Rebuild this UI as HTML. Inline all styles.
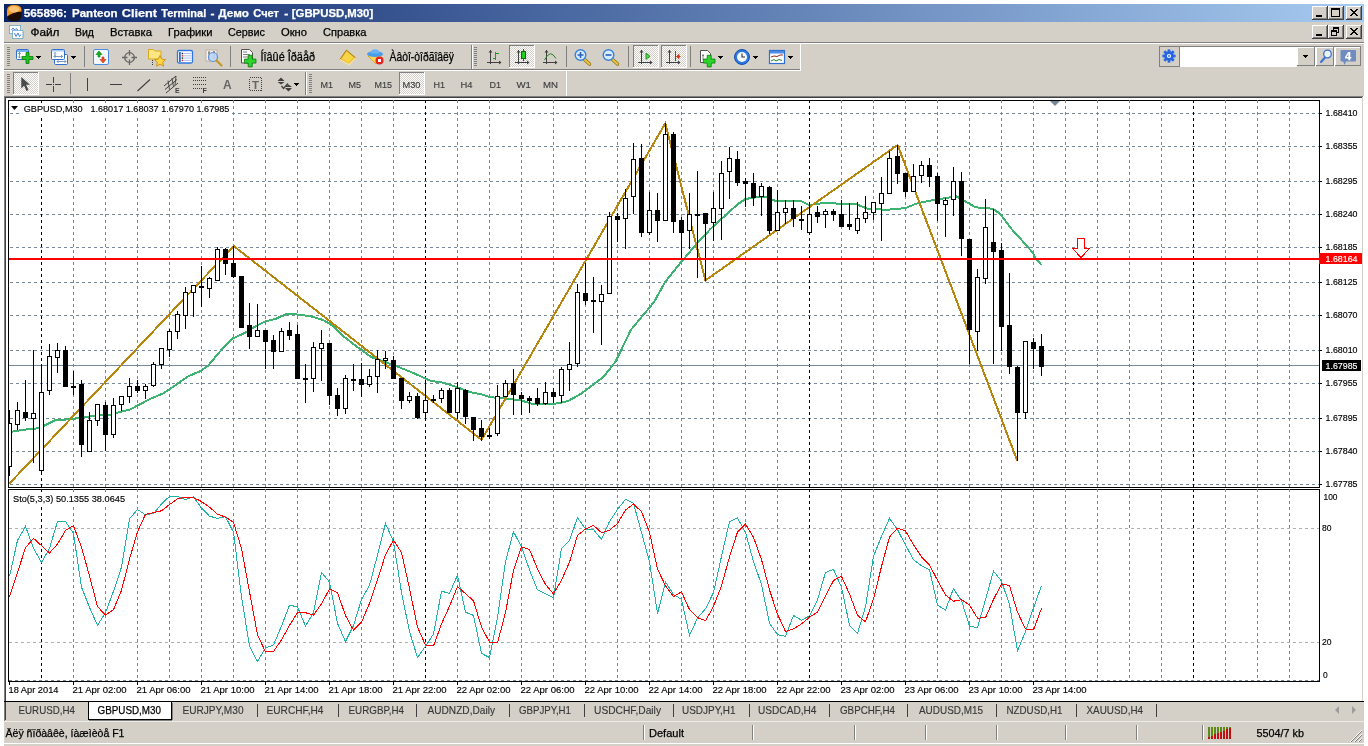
<!DOCTYPE html>
<html lang="ru"><head><meta charset="utf-8"><title>565896: Panteon Client Terminal - Демо Счет - [GBPUSD,M30]</title>
<style>
html,body{margin:0;padding:0;background:#fff;}
body{width:1368px;height:746px;overflow:hidden;position:relative;}
svg{position:absolute;left:0;top:0;display:block;will-change:transform;}
text{font-family:"Liberation Sans","DejaVu Sans",sans-serif;font-size:11px;fill:#000;stroke:#000;stroke-width:0.25px;}
.b{font-weight:bold;}
.c{shape-rendering:crispEdges;}
.ax{font-size:9.4px;stroke-width:0.15px;}
.tf{font-size:9.5px;fill:#404040;stroke:#404040;stroke-width:0.15px;}
.tab{font-size:11px;fill:#383838;stroke:#383838;stroke-width:0.15px;}
.tabs{font-size:11px;fill:#000;}
.w{fill:#fff;stroke:#fff;}
</style></head><body>
<svg width="1368" height="746" viewBox="0 0 1368 746">
<defs>
<linearGradient id="tg" x1="0" y1="0" x2="1" y2="0"><stop offset="0" stop-color="#0A246A"/><stop offset="1" stop-color="#A6CAF0"/></linearGradient>
<pattern id="chk" width="2" height="2" patternUnits="userSpaceOnUse"><rect width="2" height="2" fill="#fff"/><rect width="1" height="1" fill="#D4D0C8"/><rect x="1" y="1" width="1" height="1" fill="#D4D0C8"/></pattern>
<clipPath id="cpm"><rect x="9" y="101" width="1310" height="386"/></clipPath>
<clipPath id="cps"><rect x="9" y="490" width="1310" height="191"/></clipPath>
</defs>
<rect class="c" x="4" y="4" width="1360" height="742" fill="#D4D0C8" />
<rect class="c" x="4" y="4" width="1360" height="18" fill="url(#tg)" />
<g><rect x="7" y="5" width="14.500" height="16" rx="5.500" fill="#1C0E02"/><path d="M7 16.500V10.500Q7 5 14 5Q21.500 5 21.500 10V11.500Q13 12 7 16.500Z" fill="#F59A23"/><ellipse cx="14" cy="9.300" rx="5.200" ry="3.200" fill="#FFD7A6" fill-opacity="0.650"/></g>
<text x="23.75" y="16.5" class="b w" textLength="43.25" lengthAdjust="spacingAndGlyphs">565896:</text>
<text x="72" y="16.5" class="b w" textLength="45.5" lengthAdjust="spacingAndGlyphs">Panteon</text>
<text x="121.75" y="16.5" class="b w" textLength="35.25" lengthAdjust="spacingAndGlyphs">Client</text>
<text x="161.25" y="16.5" class="b w" textLength="45" lengthAdjust="spacingAndGlyphs">Terminal</text>
<text x="210.5" y="16.5" class="b w" textLength="4" lengthAdjust="spacingAndGlyphs">-</text>
<text x="218.3" y="16.5" class="b w" textLength="30.5" lengthAdjust="spacingAndGlyphs">Демо</text>
<text x="253.3" y="16.5" class="b w" textLength="25.7" lengthAdjust="spacingAndGlyphs">Счет</text>
<text x="284.3" y="16.5" class="b w" textLength="4" lengthAdjust="spacingAndGlyphs">-</text>
<text x="291.8" y="16.5" class="b w" textLength="81.4" lengthAdjust="spacingAndGlyphs">[GBPUSD,M30]</text>
<rect class="c" x="1312" y="6" width="16" height="14" fill="#D4D0C8" />
<rect class="c" x="1312" y="6" width="15" height="1" fill="#FFFFFF" />
<rect class="c" x="1312" y="6" width="1" height="13" fill="#FFFFFF" />
<rect class="c" x="1312" y="19" width="16" height="1" fill="#404040" />
<rect class="c" x="1327" y="6" width="1" height="14" fill="#404040" />
<rect class="c" x="1313" y="18" width="14" height="1" fill="#808080" />
<rect class="c" x="1326" y="7" width="1" height="12" fill="#808080" />
<rect class="c" x="1316" y="15" width="6" height="2" fill="#000" />
<rect class="c" x="1328" y="6" width="16" height="14" fill="#D4D0C8" />
<rect class="c" x="1328" y="6" width="15" height="1" fill="#FFFFFF" />
<rect class="c" x="1328" y="6" width="1" height="13" fill="#FFFFFF" />
<rect class="c" x="1328" y="19" width="16" height="1" fill="#404040" />
<rect class="c" x="1343" y="6" width="1" height="14" fill="#404040" />
<rect class="c" x="1329" y="18" width="14" height="1" fill="#808080" />
<rect class="c" x="1342" y="7" width="1" height="12" fill="#808080" />
<rect class="c" x="1331" y="8" width="9" height="9" fill="#000" />
<rect class="c" x="1332" y="10" width="7" height="6" fill="#D4D0C8" />
<rect class="c" x="1346" y="6" width="16" height="14" fill="#D4D0C8" />
<rect class="c" x="1346" y="6" width="15" height="1" fill="#FFFFFF" />
<rect class="c" x="1346" y="6" width="1" height="13" fill="#FFFFFF" />
<rect class="c" x="1346" y="19" width="16" height="1" fill="#404040" />
<rect class="c" x="1361" y="6" width="1" height="14" fill="#404040" />
<rect class="c" x="1347" y="18" width="14" height="1" fill="#808080" />
<rect class="c" x="1360" y="7" width="1" height="12" fill="#808080" />
<path class="c" d="M1350 9h2v1h-2zM1356 9h2v1h-2zM1351 10h2v1h-2zM1355 10h2v1h-2zM1352 11h4v1h-4zM1353 12h2v1h-2zM1352 13h4v1h-4zM1351 14h2v1h-2zM1355 14h2v1h-2zM1350 15h2v1h-2zM1356 15h2v1h-2z" fill="#000"/>
<rect class="c" x="1312" y="25" width="16" height="14" fill="#D4D0C8" />
<rect class="c" x="1312" y="25" width="15" height="1" fill="#FFFFFF" />
<rect class="c" x="1312" y="25" width="1" height="13" fill="#FFFFFF" />
<rect class="c" x="1312" y="38" width="16" height="1" fill="#404040" />
<rect class="c" x="1327" y="25" width="1" height="14" fill="#404040" />
<rect class="c" x="1313" y="37" width="14" height="1" fill="#808080" />
<rect class="c" x="1326" y="26" width="1" height="12" fill="#808080" />
<rect class="c" x="1316" y="34" width="6" height="2" fill="#000" />
<rect class="c" x="1328" y="25" width="16" height="14" fill="#D4D0C8" />
<rect class="c" x="1328" y="25" width="15" height="1" fill="#FFFFFF" />
<rect class="c" x="1328" y="25" width="1" height="13" fill="#FFFFFF" />
<rect class="c" x="1328" y="38" width="16" height="1" fill="#404040" />
<rect class="c" x="1343" y="25" width="1" height="14" fill="#404040" />
<rect class="c" x="1329" y="37" width="14" height="1" fill="#808080" />
<rect class="c" x="1342" y="26" width="1" height="12" fill="#808080" />
<rect class="c" x="1333" y="27" width="6" height="6" fill="#000" />
<rect class="c" x="1334" y="29" width="4" height="3" fill="#D4D0C8" />
<rect class="c" x="1331" y="30" width="6" height="6" fill="#000" />
<rect class="c" x="1332" y="32" width="4" height="3" fill="#D4D0C8" />
<rect class="c" x="1346" y="25" width="16" height="14" fill="#D4D0C8" />
<rect class="c" x="1346" y="25" width="15" height="1" fill="#FFFFFF" />
<rect class="c" x="1346" y="25" width="1" height="13" fill="#FFFFFF" />
<rect class="c" x="1346" y="38" width="16" height="1" fill="#404040" />
<rect class="c" x="1361" y="25" width="1" height="14" fill="#404040" />
<rect class="c" x="1347" y="37" width="14" height="1" fill="#808080" />
<rect class="c" x="1360" y="26" width="1" height="12" fill="#808080" />
<path class="c" d="M1350 28h2v1h-2zM1356 28h2v1h-2zM1351 29h2v1h-2zM1355 29h2v1h-2zM1352 30h4v1h-4zM1353 31h2v1h-2zM1352 32h4v1h-4zM1351 33h2v1h-2zM1355 33h2v1h-2zM1350 34h2v1h-2zM1356 34h2v1h-2z" fill="#000"/>
<g><rect x="9.500" y="25.500" width="11" height="8" fill="#fff" stroke="#5A90F0" stroke-dasharray="1 1"/><rect x="9.500" y="25.500" width="11" height="8" fill="none" stroke="#40A080" stroke-dasharray="1 1" stroke-dashoffset="1" stroke-opacity="0.600"/><path d="M11.500 30l1.500-2 1.500 2 1.500-1.500 2 1.500" stroke="#3070E0" fill="none" stroke-width="0.900"/><rect x="12.500" y="30.500" width="10.500" height="8" fill="#fff" stroke="#5A90F0" stroke-dasharray="1 1"/><rect x="12.500" y="30.500" width="10.500" height="8" fill="none" stroke="#40A080" stroke-dasharray="1 1" stroke-dashoffset="1" stroke-opacity="0.600"/><path d="M14.500 33l1.500 3.500 2-3.500 1.500 3.500 1.500-2" stroke="#3070E0" fill="none" stroke-width="0.900"/></g>
<text x="30.5" y="35.5" textLength="29" lengthAdjust="spacingAndGlyphs">Файл</text>
<text x="75" y="35.5" textLength="19" lengthAdjust="spacingAndGlyphs">Вид</text>
<text x="110" y="35.5" textLength="42" lengthAdjust="spacingAndGlyphs">Вставка</text>
<text x="168" y="35.5" textLength="44.5" lengthAdjust="spacingAndGlyphs">Графики</text>
<text x="228" y="35.5" textLength="37" lengthAdjust="spacingAndGlyphs">Сервис</text>
<text x="281" y="35.5" textLength="26" lengthAdjust="spacingAndGlyphs">Окно</text>
<text x="323" y="35.5" textLength="43.5" lengthAdjust="spacingAndGlyphs">Справка</text>
<rect class="c" x="4" y="42" width="1360" height="1" fill="#808080" />
<rect class="c" x="4" y="43" width="1360" height="1" fill="#FFFFFF" />
<rect class="c" x="4" y="69" width="797" height="1" fill="#808080" />
<rect class="c" x="4" y="70" width="797" height="1" fill="#FFFFFF" />
<rect class="c" x="800" y="44" width="1" height="26" fill="#FFFFFF" />
<rect class="c" x="7" y="47" width="3" height="1" fill="#808080" />
<rect class="c" x="7" y="49" width="3" height="1" fill="#808080" />
<rect class="c" x="7" y="51" width="3" height="1" fill="#808080" />
<rect class="c" x="7" y="53" width="3" height="1" fill="#808080" />
<rect class="c" x="7" y="55" width="3" height="1" fill="#808080" />
<rect class="c" x="7" y="57" width="3" height="1" fill="#808080" />
<rect class="c" x="7" y="59" width="3" height="1" fill="#808080" />
<rect class="c" x="7" y="61" width="3" height="1" fill="#808080" />
<rect class="c" x="7" y="63" width="3" height="1" fill="#808080" />
<rect class="c" x="7" y="65" width="3" height="1" fill="#808080" />
<g>
<rect x="16.5" y="49.5" width="12" height="10" rx="1" fill="#fff" stroke="#2F6FCF"/>
<rect x="17" y="50" width="11" height="2" fill="#7FB0EE"/>
<path d="M19.5 52v6M18 54l1.5-1.5 1.5 1.5M18 56.5l1.5 1.5 1.5-1.5" stroke="#5A7FB0" fill="none" stroke-width="0.8"/>
<path d="M26 52.5h3v4h4v3h-4v4h-3v-4h-4v-3h4z" fill="#22C022" stroke="#0A7A0A" stroke-width="0.8"/>
</g>
<path class="c" d="M36 56h5l-2.5 3z" fill="#000"/>
<g>
<rect x="54.500" y="54.500" width="13" height="10" rx="1" fill="#fff" stroke="#2F6FCF"/>
<path d="M57 61.500h9M58.500 60l-1.500 1.500 1.500 1.500M64.500 60l1.500 1.500-1.500 1.500" stroke="#6A8FC0" fill="none" stroke-width="0.900"/>
<rect x="51.500" y="49.500" width="13" height="10" rx="1" fill="#fff" stroke="#2F6FCF"/>
<rect x="52" y="50" width="12" height="1.500" fill="#A8CCF4"/>
<path d="M54 56.500h8.500M55.500 55l-1.500 1.500 1.500 1.500M61 55l1.500 1.500-1.500 1.500M55 52.500v4M54 53.500l1-1 1 1" stroke="#6A8FC0" fill="none" stroke-width="0.900"/>
</g>
<path class="c" d="M71 56h5l-2.5 3z" fill="#000"/>
<rect class="c" x="84" y="46" width="1" height="21" fill="#808080" />
<g>
<rect x="93.500" y="49.500" width="15" height="15" rx="1.500" fill="#F4F8FF" stroke="#4A8CE0"/>
<path d="M96 54.500l3-3.500 3 3.500h-2v2.500h-2v-2.500z" fill="#18B018" stroke="#0A800A" stroke-width="0.600"/>
<path d="M100 59.500l3 3.500 3-3.500h-2v-2.500h-2v2.500z" fill="#F05020" stroke="#C03010" stroke-width="0.600"/>
</g>
<g fill="none" stroke="#666" stroke-width="1.300"><circle cx="129.500" cy="57.500" r="4.800"/><path d="M129.500 50v5.500M129.500 59.500v5.500M122 57.500h5.500M131.500 57.500h5.500"/></g>
<g>
<path d="M148.500 52v-2.500h5l1.500 1.500h6v8h-12.500z" fill="#FFE680" stroke="#D8A820"/>
<path d="M160 55.500l1.700 3.600 3.900 .5-2.900 2.700 .8 3.900-3.500-2-3.500 2 .8-3.900-2.900-2.700 3.900-.5z" fill="#FFD840" stroke="#C89010" stroke-width="0.900"/>
<path d="M152.500 60v5" stroke="#404040" stroke-dasharray="1 1"/>
</g>
<g>
<rect x="177.500" y="50.500" width="15" height="12.500" rx="1.500" fill="#fff" stroke="#2F78E0" stroke-width="1.300"/>
<rect x="179" y="52" width="1.800" height="10" fill="#3A6AB8"/>
<path d="M183.500 53.500h8M183.500 55.800h8M183.500 58.100h8M183.500 60.400h8" stroke="#9AB0E0" stroke-width="0.800"/>
<rect x="181.700" y="52.800" width="1.400" height="1.400" fill="#202020"/><rect x="181.700" y="55.100" width="1.400" height="1.400" fill="#E02020"/><rect x="181.700" y="57.400" width="1.400" height="1.400" fill="#202020"/><rect x="181.700" y="59.700" width="1.400" height="1.400" fill="#E02020"/>
</g>
<g>
<rect x="206" y="50" width="11" height="11" fill="#F8F4EC" stroke="#B0A898" stroke-width="0.800"/>
<path d="M209 51v9M214 51v8M208 53h2M213 52h2" stroke="#606060" stroke-width="0.900"/>
<circle cx="213" cy="57" r="4.500" fill="#B8D4F8" fill-opacity="0.850" stroke="#6090D8" stroke-width="1.200"/>
<path d="M216.500 60.500l5 5" stroke="#C89820" stroke-width="2.200" stroke-linecap="round"/>
</g>
<rect class="c" x="230" y="46" width="1" height="21" fill="#808080" />
<g>
<path d="M241.500 49.500h8l3 3v10.500h-11z" fill="#fff" stroke="#505050"/>
<path d="M243 52h4M243 54.500h7M243 57h7" stroke="#707070" stroke-width="0.900"/>
<path d="M248.200 55.300h4v3.800h3.800v4h-3.800v3.800h-4v-3.800h-3.800v-4h3.800z" fill="#2CD42C" stroke="#0A7A0A" stroke-width="0.800"/>
</g>
<text x="260.5" y="60.5" style="font-size:12px" textLength="54.500" lengthAdjust="spacingAndGlyphs">Íîâûé Îðäåð</text>
<g>
<path d="M340 59.400L346.400 50.100L355.600 57.800L349 64.500Z" fill="#E8B418" stroke="#A87408" stroke-width="0.900"/>
<path d="M341.500 58.800L346.700 51.600L353.800 57.600L348.600 63Z" fill="#F8D448"/>
<path d="M340 59.400l9 5.100 6.600-6.700" fill="none" stroke="#FFF0B0" stroke-width="1.100"/>
</g>
<g>
<path d="M368 56l8 8 6-9z" fill="#FFD850" stroke="#D0A020" stroke-width="0.800"/>
<ellipse cx="375" cy="54" rx="8" ry="3" fill="#4A9CE8"/>
<path d="M370.500 53.500q0-4.300 4.500-4.300t4.500 4.300z" fill="#6AB4F4"/>
<circle cx="379.500" cy="60.500" r="4" fill="#E82020"/><rect x="378" y="59" width="3" height="3" fill="#fff"/>
</g>
<text x="389.5" y="60.5" style="font-size:12px" textLength="64.500" lengthAdjust="spacingAndGlyphs">Àâòî-òîðãîâëÿ</text>
<rect class="c" x="471" y="45" width="1" height="24" fill="#808080" />
<rect class="c" x="472" y="45" width="1" height="24" fill="#FFFFFF" />
<rect class="c" x="474" y="47" width="3" height="1" fill="#808080" />
<rect class="c" x="474" y="49" width="3" height="1" fill="#808080" />
<rect class="c" x="474" y="51" width="3" height="1" fill="#808080" />
<rect class="c" x="474" y="53" width="3" height="1" fill="#808080" />
<rect class="c" x="474" y="55" width="3" height="1" fill="#808080" />
<rect class="c" x="474" y="57" width="3" height="1" fill="#808080" />
<rect class="c" x="474" y="59" width="3" height="1" fill="#808080" />
<rect class="c" x="474" y="61" width="3" height="1" fill="#808080" />
<rect class="c" x="474" y="63" width="3" height="1" fill="#808080" />
<rect class="c" x="474" y="65" width="3" height="1" fill="#808080" />
<path class="c" d="M490.5 50v14M487 62.500h14" stroke="#404040" fill="none"/><path d="M488.5 52.500l2-2.500 2 2.500zM499 60.500l2.500 2-2.500 2z" fill="#404040"/>
<path class="c" d="M495.500 52v8M495.500 53.500h3M493 58.500h2.500" stroke="#18A018" stroke-width="1.500" fill="none"/>
<rect class="c" x="509" y="45" width="26" height="23" fill="url(#chk)" />
<rect class="c" x="509" y="45" width="26" height="1" fill="#808080" />
<rect class="c" x="509" y="45" width="1" height="23" fill="#808080" />
<rect class="c" x="509" y="67" width="26" height="1" fill="#FFFFFF" />
<rect class="c" x="534" y="45" width="1" height="23" fill="#FFFFFF" />
<path class="c" d="M518.5 50v14M515 62.500h14" stroke="#404040" fill="none"/><path d="M516.5 52.500l2-2.500 2 2.500zM527 60.500l2.500 2-2.500 2z" fill="#404040"/>
<g class="c"><path d="M523.500 49v12" stroke="#0A700A"/><rect x="521.500" y="51.500" width="4" height="7" fill="#20D020" stroke="#0A700A"/></g>
<path class="c" d="M546.5 50v14M543 62.500h14" stroke="#404040" fill="none"/><path d="M544.5 52.500l2-2.500 2 2.500zM555 60.500l2.500 2-2.500 2z" fill="#404040"/>
<path d="M544.500 60q3-6 6-6.300 2.500 0 5.500 4.800" stroke="#208020" stroke-width="1" fill="none"/>
<rect class="c" x="566" y="46" width="1" height="21" fill="#808080" />
<g><path d="M584.5 59.500l5 4.500" stroke="#8A6A10" stroke-width="3.400" stroke-linecap="round"/><path d="M584.5 59.500l5 4.500" stroke="#E8C840" stroke-width="2" stroke-linecap="round"/><circle cx="580.5" cy="55" r="5.300" fill="#D8ECFF" stroke="#3A80D8" stroke-width="1.400"/><path d="M577.5 55h6M580.5 52v6" stroke="#2A60C0" stroke-width="1.600"/></g>
<g><path d="M612.5 59.500l5 4.500" stroke="#8A6A10" stroke-width="3.400" stroke-linecap="round"/><path d="M612.5 59.500l5 4.500" stroke="#E8C840" stroke-width="2" stroke-linecap="round"/><circle cx="608.5" cy="55" r="5.300" fill="#D8ECFF" stroke="#3A80D8" stroke-width="1.400"/><path d="M605.5 55h6" stroke="#2A60C0" stroke-width="1.600"/></g>
<rect class="c" x="628" y="46" width="1" height="21" fill="#808080" />
<rect class="c" x="633" y="45" width="26" height="23" fill="url(#chk)" />
<rect class="c" x="633" y="45" width="26" height="1" fill="#808080" />
<rect class="c" x="633" y="45" width="1" height="23" fill="#808080" />
<rect class="c" x="633" y="67" width="26" height="1" fill="#FFFFFF" />
<rect class="c" x="658" y="45" width="1" height="23" fill="#FFFFFF" />
<path class="c" d="M641.5 50v14M638 62.500h14" stroke="#404040" fill="none"/><path d="M639.5 52.500l2-2.500 2 2.500zM650 60.500l2.500 2-2.500 2z" fill="#404040"/>
<path d="M646 53.300l4 3-4 3z" fill="#50E050" stroke="#109010" stroke-width="0.900"/>
<rect class="c" x="661" y="45" width="26" height="23" fill="url(#chk)" />
<rect class="c" x="661" y="45" width="26" height="1" fill="#808080" />
<rect class="c" x="661" y="45" width="1" height="23" fill="#808080" />
<rect class="c" x="661" y="67" width="26" height="1" fill="#FFFFFF" />
<rect class="c" x="686" y="45" width="1" height="23" fill="#FFFFFF" />
<path class="c" d="M669.5 50v14M666 62.500h14" stroke="#404040" fill="none"/><path d="M667.5 52.500l2-2.500 2 2.500zM678 60.500l2.500 2-2.500 2z" fill="#404040"/>
<path class="c" d="M675.500 51v10" stroke="#2060B0"/><path d="M680.500 56.500h-3.500M679 54.500l-2.500 2 2.500 2z" stroke="#D03810" fill="#D03810" stroke-width="1"/>
<rect class="c" x="690" y="46" width="1" height="21" fill="#808080" />
<g>
<path d="M700.500 50.500h7l3 3v9h-10z" fill="#fff" stroke="#505050"/>
<path d="M703 54v6M702 55.500h2" stroke="#707070" stroke-width="0.900"/>
<path d="M707.200 55.300h4v3.800h3.800v4h-3.800v3.800h-4v-3.800h-3.800v-4h3.800z" fill="#2CD42C" stroke="#0A7A0A" stroke-width="0.800"/>
</g>
<path class="c" d="M718 56h5l-2.5 3z" fill="#000"/>
<g><circle cx="742" cy="57" r="7.500" fill="#2A78E0" stroke="#1850B0"/><circle cx="742" cy="57" r="5" fill="#F4F8FF"/><path d="M742 53.500v3.500h3" stroke="#303030" fill="none" stroke-width="1.100"/></g>
<path class="c" d="M753 56h5l-2.5 3z" fill="#000"/>
<g>
<rect x="769.500" y="50.500" width="15" height="13" fill="#fff" stroke="#2F6FCF" stroke-width="1.200"/>
<rect x="770" y="51" width="14" height="2.500" fill="#4A8CE8"/>
<path d="M771 57l3-1 3 .5 3-1.500 3 0" stroke="#903020" fill="none"/>
<path d="M771 61l3-1.500 2 1.500 3-1.500 3 1" stroke="#208030" fill="none"/>
</g>
<path class="c" d="M788 56h5l-2.5 3z" fill="#000"/>
<rect class="c" x="1159" y="46" width="202" height="21" fill="#fff" />
<rect class="c" x="1159" y="46" width="202" height="1" fill="#808080" />
<rect class="c" x="1159" y="46" width="1" height="21" fill="#808080" />
<rect class="c" x="1160" y="47" width="19" height="19" fill="#D4D0C8" />
<rect class="c" x="1179" y="46" width="1" height="20" fill="#808080" />
<rect class="c" x="1159" y="66" width="21" height="1" fill="#808080" />
<g transform="translate(1169 56)" fill="#2466E4"><rect x="-1.400" y="-6.600" width="2.800" height="3" transform="rotate(0)"/><rect x="-1.400" y="-6.600" width="2.800" height="3" transform="rotate(45)"/><rect x="-1.400" y="-6.600" width="2.800" height="3" transform="rotate(90)"/><rect x="-1.400" y="-6.600" width="2.800" height="3" transform="rotate(135)"/><rect x="-1.400" y="-6.600" width="2.800" height="3" transform="rotate(180)"/><rect x="-1.400" y="-6.600" width="2.800" height="3" transform="rotate(225)"/><rect x="-1.400" y="-6.600" width="2.800" height="3" transform="rotate(270)"/><rect x="-1.400" y="-6.600" width="2.800" height="3" transform="rotate(315)"/><circle r="4.700"/><circle r="2.100" fill="#fff"/><circle r="0.900"/></g>
<rect class="c" x="1297" y="47" width="18" height="19" fill="#D4D0C8" />
<rect class="c" x="1297" y="47" width="18" height="1" fill="#FFFFFF" />
<rect class="c" x="1297" y="47" width="1" height="19" fill="#FFFFFF" />
<rect class="c" x="1297" y="65" width="18" height="1" fill="#808080" />
<rect class="c" x="1314" y="47" width="1" height="19" fill="#808080" />
<rect class="c" x="1297" y="66" width="18" height="1" fill="#D4D0C8" />
<path class="c" d="M1303 55h5l-2.5 3z" fill="#000"/>
<rect class="c" x="1316" y="47" width="18" height="19" fill="#D4D0C8" />
<rect class="c" x="1316" y="47" width="18" height="1" fill="#FFFFFF" />
<rect class="c" x="1316" y="47" width="1" height="19" fill="#FFFFFF" />
<rect class="c" x="1316" y="65" width="18" height="1" fill="#808080" />
<rect class="c" x="1333" y="47" width="1" height="19" fill="#808080" />
<rect class="c" x="1316" y="66" width="18" height="1" fill="#D4D0C8" />
<g><path d="M1321 62l4-4.500" stroke="#3A70D0" stroke-width="2" stroke-linecap="round"/><circle cx="1327.500" cy="54" r="3.800" fill="#EAF4FF" stroke="#3A70D0" stroke-width="1.300"/></g>
<rect class="c" x="1335" y="47" width="26" height="19" fill="#D4D0C8" />
<rect class="c" x="1335" y="47" width="26" height="1" fill="#FFFFFF" />
<rect class="c" x="1335" y="47" width="1" height="19" fill="#FFFFFF" />
<rect class="c" x="1335" y="65" width="26" height="1" fill="#808080" />
<rect class="c" x="1360" y="47" width="1" height="19" fill="#808080" />
<rect class="c" x="1335" y="66" width="26" height="1" fill="#D4D0C8" />
<path d="M1341.500 50h13.500q1 0 1 1v9.500q0 1-1 1h-9l-1.200 3.500-1.800-3.500h-1.500q-1 0-1-1v-9.500q0-1 1-1z" fill="#6E8CC0"/>
<text x="1345" y="60" class="b w" style="font-size:11px">4</text>
<rect class="c" x="566" y="71" width="1" height="25" fill="#FFFFFF" />
<rect class="c" x="7" y="74" width="3" height="1" fill="#808080" />
<rect class="c" x="7" y="76" width="3" height="1" fill="#808080" />
<rect class="c" x="7" y="78" width="3" height="1" fill="#808080" />
<rect class="c" x="7" y="80" width="3" height="1" fill="#808080" />
<rect class="c" x="7" y="82" width="3" height="1" fill="#808080" />
<rect class="c" x="7" y="84" width="3" height="1" fill="#808080" />
<rect class="c" x="7" y="86" width="3" height="1" fill="#808080" />
<rect class="c" x="7" y="88" width="3" height="1" fill="#808080" />
<rect class="c" x="7" y="90" width="3" height="1" fill="#808080" />
<rect class="c" x="7" y="92" width="3" height="1" fill="#808080" />
<rect class="c" x="13" y="72" width="26" height="23" fill="url(#chk)" />
<rect class="c" x="13" y="72" width="26" height="1" fill="#808080" />
<rect class="c" x="13" y="72" width="1" height="23" fill="#808080" />
<rect class="c" x="13" y="94" width="26" height="1" fill="#FFFFFF" />
<rect class="c" x="38" y="72" width="1" height="23" fill="#FFFFFF" />
<path d="M21.300 77v11.500l2.800-2.800 2.400 5.300 2-1-2.400-5.200h3.900z" fill="#4A4A4A"/>
<path class="c" d="M53.500 77v6M53.500 86v6M46 84.500h6M55 84.500h6M53 84.500h1" stroke="#404040" fill="none"/>
<rect class="c" x="70" y="73" width="1" height="21" fill="#808080" />
<path class="c" d="M87.500 78v13" stroke="#404040"/>
<path class="c" d="M110 84.500h12" stroke="#404040"/>
<path d="M137.500 91l12.500-11.500" stroke="#404040" stroke-width="1.100"/>
<g stroke="#404040" stroke-width="1" fill="none"><path d="M164 86l12-10M165 89.500l12-10M166 93l12-10"/><path d="M168 80.500l1.500 9M172 78l1.500 9M176 76l-1 9" stroke-width="0.900"/></g>
<text x="175" y="93" class="b" style="font-size:7px;fill:#404040;stroke:none">E</text>
<g class="c" stroke="#404040" stroke-dasharray="1 1"><path d="M193 77.500h13M193 80.500h13M193 84.500h13M193 88.500h9"/></g>
<text x="202.5" y="93" class="b" style="font-size:7px;fill:#404040;stroke:none">F</text>
<text x="223" y="89" class="b" style="font-size:12px;fill:#666;stroke:none">A</text>
<rect class="c" x="249.500" y="77.500" width="12" height="13" fill="none" stroke="#404040" stroke-dasharray="1 1"/>
<text x="252" y="88.8" class="b" style="font-size:11.500px;fill:#666;stroke:none">T</text>
<g fill="#404040"><path d="M281 77.500l3.500 3.500h-7zM277.500 82h7l-3.500 2.500z"/><path d="M288.500 91.500l-3.500-3.500h7zM292 87h-7l3.500-2.500z"/><path d="M281.500 86l2 2.500 4.500-5" stroke="#404040" fill="none" stroke-width="1.300"/></g>
<path class="c" d="M294 83h5l-2.5 3z" fill="#000"/>
<rect class="c" x="305" y="72" width="1" height="23" fill="#808080" />
<rect class="c" x="306" y="72" width="1" height="23" fill="#FFFFFF" />
<rect class="c" x="309" y="74" width="3" height="1" fill="#808080" />
<rect class="c" x="309" y="76" width="3" height="1" fill="#808080" />
<rect class="c" x="309" y="78" width="3" height="1" fill="#808080" />
<rect class="c" x="309" y="80" width="3" height="1" fill="#808080" />
<rect class="c" x="309" y="82" width="3" height="1" fill="#808080" />
<rect class="c" x="309" y="84" width="3" height="1" fill="#808080" />
<rect class="c" x="309" y="86" width="3" height="1" fill="#808080" />
<rect class="c" x="309" y="88" width="3" height="1" fill="#808080" />
<rect class="c" x="309" y="90" width="3" height="1" fill="#808080" />
<rect class="c" x="309" y="92" width="3" height="1" fill="#808080" />
<rect class="c" x="399" y="72" width="26" height="23" fill="url(#chk)" />
<rect class="c" x="399" y="72" width="26" height="1" fill="#808080" />
<rect class="c" x="399" y="72" width="1" height="23" fill="#808080" />
<rect class="c" x="399" y="94" width="26" height="1" fill="#FFFFFF" />
<rect class="c" x="424" y="72" width="1" height="23" fill="#FFFFFF" />
<text x="320.5" y="87.5" class="tf" textLength="12.5" lengthAdjust="spacingAndGlyphs">M1</text>
<text x="348.5" y="87.5" class="tf" textLength="12.5" lengthAdjust="spacingAndGlyphs">M5</text>
<text x="374.5" y="87.5" class="tf" textLength="17.5" lengthAdjust="spacingAndGlyphs">M15</text>
<text x="402.5" y="87.5" class="tf" textLength="18" lengthAdjust="spacingAndGlyphs">M30</text>
<text x="433.5" y="87.5" class="tf" textLength="11.5" lengthAdjust="spacingAndGlyphs">H1</text>
<text x="460.5" y="87.5" class="tf" textLength="12" lengthAdjust="spacingAndGlyphs">H4</text>
<text x="489.5" y="87.5" class="tf" textLength="11.5" lengthAdjust="spacingAndGlyphs">D1</text>
<text x="516.5" y="87.5" class="tf" textLength="14.5" lengthAdjust="spacingAndGlyphs">W1</text>
<text x="543" y="87.5" class="tf" textLength="15" lengthAdjust="spacingAndGlyphs">MN</text>
<rect class="c" x="4" y="96" width="1360" height="606" fill="#fff" />
<rect class="c" x="4" y="96" width="1360" height="1" fill="#808080" />
<rect class="c" x="5" y="97" width="1358" height="1" fill="#404040" />
<rect class="c" x="4" y="96" width="1" height="606" fill="#808080" />
<rect class="c" x="5" y="97" width="1" height="604" fill="#404040" />
<rect class="c" x="1362" y="97" width="1" height="604" fill="#D4D0C8" />
<rect class="c" x="1363" y="96" width="1" height="606" fill="#FFFFFF" />
<rect class="c" x="4" y="701" width="1360" height="1" fill="#000" />
<g class="c" fill="none" stroke="#000"><rect x="8.500" y="100.500" width="1311" height="387"/><rect x="8.500" y="489.500" width="1311" height="192"/></g>
<path class="c" d="M10 113.5H1319M10 146.5H1319M10 181.5H1319M10 214.5H1319M10 247.5H1319M10 282.5H1319M10 315.5H1319M10 350.5H1319M10 383.5H1319M10 418.5H1319M10 451.5H1319M10 484.5H1319" stroke="#778899" stroke-dasharray="3 3" fill="none"/>
<path class="c" d="M73.5 100V487M73.5 489V681M105.5 100V487M105.5 489V681M137.5 100V487M137.5 489V681M169.5 100V487M169.5 489V681M201.5 100V487M201.5 489V681M233.5 100V487M233.5 489V681M265.5 100V487M265.5 489V681M297.5 100V487M297.5 489V681M329.5 100V487M329.5 489V681M361.5 100V487M361.5 489V681M393.5 100V487M393.5 489V681M457.5 100V487M457.5 489V681M489.5 100V487M489.5 489V681M521.5 100V487M521.5 489V681M553.5 100V487M553.5 489V681M585.5 100V487M585.5 489V681M617.5 100V487M617.5 489V681M649.5 100V487M649.5 489V681M681.5 100V487M681.5 489V681M713.5 100V487M713.5 489V681M745.5 100V487M745.5 489V681M777.5 100V487M777.5 489V681M841.5 100V487M841.5 489V681M873.5 100V487M873.5 489V681M905.5 100V487M905.5 489V681M937.5 100V487M937.5 489V681M969.5 100V487M969.5 489V681M1001.5 100V487M1001.5 489V681M1033.5 100V487M1033.5 489V681M1065.5 100V487M1065.5 489V681M1097.5 100V487M1097.5 489V681M1129.5 100V487M1129.5 489V681M1161.5 100V487M1161.5 489V681M1225.5 100V487M1225.5 489V681M1257.5 100V487M1257.5 489V681M1289.5 100V487M1289.5 489V681" stroke="#778899" stroke-dasharray="3 3" fill="none"/>
<path class="c" d="M41.5 100V487M41.5 489V681M425.5 100V487M425.5 489V681M809.5 100V487M809.5 489V681M1193.5 100V487M1193.5 489V681" stroke="#000" stroke-dasharray="3 3" fill="none"/>
<path class="c" d="M9 680.500H1319" stroke="#778899" stroke-dasharray="3 3" fill="none"/>
<path class="c" d="M9 528.500H1319M9 642.500H1319" stroke="#B0B0B0" stroke-dasharray="3 3" fill="none"/>
<rect class="c" x="9" y="365" width="1310" height="1" fill="#778899" />
<g clip-path="url(#cpm)">
<polyline class="c" points="9,432 12.5,431.6 25,429.6 37.6,428.3 45,425.3 55,420.3 72.7,419 82.7,417.3 97.7,415.3 110,414.8 120,412 130,409.5 138,405.3 150,399 163,393.5 175.4,385.2 188,376.4 200.5,371 208,365.7 218,353.9 225.6,345 233,338.3 245.6,332.6 255.6,326.3 265.7,321.3 275.7,318.8 285.7,314.5 295.7,314.3 310.8,316.3 323.3,320 333.3,326.3 345,337.6 360,348.9 371.4,357.1 380,360.2 395.2,365.7 412.7,372.7 430.3,380.7 442.8,382.7 455.3,386.5 470.4,392.2 482.9,394.7 490.4,397.2 505.4,398.5 520.5,400.3 533,404 545.5,404.5 558,403.3 568,401 580.6,394 590.7,386.5 603.2,377.2 615.7,361.4 630.8,330 643.3,315 654,302 665.3,281.7 680.4,262.9 695.4,245.3 710.4,229 725.5,215.3 738,204 745.5,199 760.6,196.5 768,197.7 775.6,201 800.7,201 809.4,205.2 815.7,204 828.2,202.7 840.8,204 855.8,204 868.3,209 887.6,209.7 905,208.2 917.6,203.2 935.2,199.7 947.7,197.7 956.5,196.4 965.3,201.4 975.3,207.2 985.3,208.2 992.8,208.7 1000.4,214 1010.4,227.7 1022.9,241.5 1033,252.8 1035.4,257.8 1041.7,265.3" fill="none" stroke="#3CB371" stroke-width="2"/>
<polyline class="c" points="9,484 233.8,246.1 481.6,439.8 665.3,123.3 705.4,280.4 897.6,145 1017.1,460.4" fill="none" stroke="#B8860B" stroke-width="2"/>
<path class="c" d="M9.5 410V476M17.5 402V430M25.5 380V421M33.5 350V463M41.5 364V475M49.5 344V395M57.5 343V373M65.5 346V387M73.5 371V395M81.5 380V457M89.5 412V452M97.5 404V426M105.5 402V451M113.5 398V438M121.5 396V411M129.5 378V403M137.5 380V393M145.5 384V399M153.5 362V387M161.5 348V369M169.5 329V357M177.5 311V339M185.5 287V329M193.5 285V317M201.5 266V307M209.5 277V298M217.5 247V281M225.5 248V275M233.5 246V278M241.5 276V328M249.5 303V349M257.5 304V337M265.5 330V369M273.5 335V369M281.5 328V352M289.5 322V340M297.5 325V379M305.5 364V403M313.5 342V392M321.5 330V381M329.5 343V405M337.5 388V416M345.5 375V414M353.5 364V391M361.5 363V397M369.5 369V387M377.5 350V393M385.5 351V369M393.5 356V379M401.5 378V409M409.5 392V403M417.5 393V419M425.5 380V419M433.5 395V403M441.5 388V403M449.5 388V413M457.5 382V419M465.5 389V424M473.5 417V441M481.5 420V441M489.5 428V439M497.5 385V436M505.5 380V397M513.5 369V415M521.5 392V415M529.5 396V413M537.5 388V406M545.5 382V405M553.5 388V403M561.5 367V403M569.5 342V391M577.5 284V367M585.5 263V305M593.5 277V333M601.5 285V345M609.5 212V294M617.5 213V242M625.5 189V249M633.5 143V214M641.5 144V237M649.5 192V235M657.5 193V242M665.5 123V221M673.5 132V233M681.5 217V260M689.5 193V249M697.5 171V278M705.5 213V281M713.5 192V241M721.5 161V240M729.5 147V199M737.5 151V186M745.5 178V207M753.5 173V206M761.5 183V216M769.5 186V234M777.5 190V231M785.5 200V224M793.5 200V227M801.5 206V230M809.5 203V235M817.5 206V223M825.5 209V228M833.5 209V221M841.5 200V227M849.5 203V230M857.5 202V234M865.5 196V223M873.5 202V220M881.5 177V241M889.5 151V194M897.5 145V184M905.5 173V197M913.5 164V192M921.5 161V183M929.5 158V187M937.5 173V221M945.5 198V237M953.5 167V216M961.5 172V256M969.5 239V364M977.5 269V351M985.5 199V284M993.5 209V364M1001.5 243V351M1009.5 273V374M1017.5 366V461M1025.5 341V419M1033.5 338V369M1041.5 334V376" stroke="#000" fill="none"/>
<g class="c" fill="#000"><rect x="23" y="412" width="5" height="6"/><rect x="63" y="350" width="5" height="37"/><rect x="71" y="386" width="5" height="2"/><rect x="79" y="384" width="5" height="61"/><rect x="103" y="405" width="5" height="30"/><rect x="135" y="386" width="5" height="5"/><rect x="199" y="286" width="5" height="2"/><rect x="223" y="249" width="5" height="15"/><rect x="231" y="263" width="5" height="14"/><rect x="239" y="276" width="5" height="52"/><rect x="247" y="325" width="5" height="12"/><rect x="263" y="330" width="5" height="12"/><rect x="271" y="340" width="5" height="12"/><rect x="287" y="330" width="5" height="6"/><rect x="295" y="334" width="5" height="45"/><rect x="303" y="378" width="5" height="2"/><rect x="327" y="343" width="5" height="53"/><rect x="335" y="395" width="5" height="14"/><rect x="351" y="379" width="5" height="2"/><rect x="359" y="379" width="5" height="6"/><rect x="391" y="360" width="5" height="19"/><rect x="399" y="378" width="5" height="23"/><rect x="415" y="396" width="5" height="22"/><rect x="431" y="399" width="5" height="2"/><rect x="447" y="390" width="5" height="23"/><rect x="463" y="390" width="5" height="27"/><rect x="471" y="417" width="5" height="13"/><rect x="479" y="428" width="5" height="9"/><rect x="487" y="435" width="5" height="2"/><rect x="511" y="383" width="5" height="12"/><rect x="519" y="395" width="5" height="4"/><rect x="527" y="398" width="5" height="3"/><rect x="535" y="398" width="5" height="6"/><rect x="551" y="392" width="5" height="5"/><rect x="583" y="293" width="5" height="8"/><rect x="591" y="300" width="5" height="2"/><rect x="615" y="216" width="5" height="4"/><rect x="639" y="158" width="5" height="75"/><rect x="655" y="210" width="5" height="11"/><rect x="671" y="134" width="5" height="88"/><rect x="679" y="220" width="5" height="13"/><rect x="695" y="214" width="5" height="2"/><rect x="703" y="213" width="5" height="11"/><rect x="735" y="159" width="5" height="24"/><rect x="743" y="181" width="5" height="3"/><rect x="751" y="183" width="5" height="15"/><rect x="767" y="187" width="5" height="44"/><rect x="791" y="208" width="5" height="11"/><rect x="799" y="219" width="5" height="2"/><rect x="815" y="212" width="5" height="5"/><rect x="831" y="211" width="5" height="4"/><rect x="839" y="214" width="5" height="13"/><rect x="847" y="224" width="5" height="3"/><rect x="895" y="156" width="5" height="18"/><rect x="903" y="173" width="5" height="19"/><rect x="927" y="165" width="5" height="12"/><rect x="935" y="176" width="5" height="28"/><rect x="959" y="181" width="5" height="58"/><rect x="967" y="239" width="5" height="91"/><rect x="991" y="242" width="5" height="10"/><rect x="999" y="250" width="5" height="77"/><rect x="1007" y="325" width="5" height="42"/><rect x="1015" y="367" width="5" height="46"/><rect x="1031" y="342" width="5" height="7"/><rect x="1039" y="346" width="5" height="21"/></g>
<g class="c" fill="#fff" stroke="#000"><rect x="7.5" y="423.5" width="4" height="43"/><rect x="15.5" y="410.5" width="4" height="14"/><rect x="31.5" y="413.5" width="4" height="5"/><rect x="39.5" y="392.5" width="4" height="78"/><rect x="47.5" y="356.5" width="4" height="34"/><rect x="55.5" y="350.5" width="4" height="7"/><rect x="87.5" y="420.5" width="4" height="31"/><rect x="95.5" y="404.5" width="4" height="16"/><rect x="111.5" y="405.5" width="4" height="29"/><rect x="119.5" y="396.5" width="4" height="8"/><rect x="127.5" y="386.5" width="4" height="10"/><rect x="143.5" y="386.5" width="4" height="4"/><rect x="151.5" y="364.5" width="4" height="21"/><rect x="159.5" y="348.5" width="4" height="16"/><rect x="167.5" y="331.5" width="4" height="18"/><rect x="175.5" y="314.5" width="4" height="17"/><rect x="183.5" y="292.5" width="4" height="23"/><rect x="191.5" y="285.5" width="4" height="7"/><rect x="207.5" y="278.5" width="4" height="10"/><rect x="215.5" y="249.5" width="4" height="31"/><rect x="255.5" y="330.5" width="4" height="6"/><rect x="279.5" y="331.5" width="4" height="20"/><rect x="311.5" y="347.5" width="4" height="31"/><rect x="319.5" y="343.5" width="4" height="5"/><rect x="343.5" y="378.5" width="4" height="30"/><rect x="367.5" y="376.5" width="4" height="8"/><rect x="375.5" y="359.5" width="4" height="17"/><rect x="383.5" y="358.5" width="4" height="2"/><rect x="407.5" y="396.5" width="4" height="4"/><rect x="423.5" y="400.5" width="4" height="12"/><rect x="439.5" y="390.5" width="4" height="8"/><rect x="455.5" y="388.5" width="4" height="24"/><rect x="495.5" y="396.5" width="4" height="37"/><rect x="503.5" y="383.5" width="4" height="13"/><rect x="543.5" y="392.5" width="4" height="11"/><rect x="559.5" y="369.5" width="4" height="26"/><rect x="567.5" y="364.5" width="4" height="5"/><rect x="575.5" y="292.5" width="4" height="71"/><rect x="599.5" y="294.5" width="4" height="7"/><rect x="607.5" y="216.5" width="4" height="77"/><rect x="623.5" y="198.5" width="4" height="20"/><rect x="631.5" y="159.5" width="4" height="37"/><rect x="647.5" y="210.5" width="4" height="22"/><rect x="663.5" y="134.5" width="4" height="86"/><rect x="687.5" y="214.5" width="4" height="16"/><rect x="711.5" y="208.5" width="4" height="14"/><rect x="719.5" y="173.5" width="4" height="35"/><rect x="727.5" y="158.5" width="4" height="13"/><rect x="759.5" y="186.5" width="4" height="10"/><rect x="775.5" y="212.5" width="4" height="18"/><rect x="783.5" y="208.5" width="4" height="4"/><rect x="807.5" y="214.5" width="4" height="18"/><rect x="823.5" y="211.5" width="4" height="3"/><rect x="855.5" y="218.5" width="4" height="12"/><rect x="863.5" y="212.5" width="4" height="6"/><rect x="871.5" y="202.5" width="4" height="10"/><rect x="879.5" y="193.5" width="4" height="10"/><rect x="887.5" y="158.5" width="4" height="35"/><rect x="911.5" y="176.5" width="4" height="15"/><rect x="919.5" y="165.5" width="4" height="10"/><rect x="943.5" y="200.5" width="4" height="4"/><rect x="951.5" y="181.5" width="4" height="18"/><rect x="975.5" y="277.5" width="4" height="54"/><rect x="983.5" y="227.5" width="4" height="51"/><rect x="1023.5" y="341.5" width="4" height="71"/></g>
</g>
<rect class="c" x="9" y="258" width="1310" height="2" fill="#FF0000" />
<path class="c" d="M1077.500 238.500h7v10h5l-8.500 9-8.500-9h5z" fill="#fff" stroke="#FF0000"/>
<path d="M1050 101h10l-5 5z" fill="#778899"/>
<g clip-path="url(#cps)">
<polyline class="c" points="9.5,576.5 17.5,540.3 25.5,526.4 33.5,548.3 41.5,562.3 49.5,548.3 57.5,521.5 65.5,521.5 73.5,533.6 81.5,587.2 89.5,607.3 97.5,625.3 105.5,612.7 113.5,591.2 121.5,567.1 129.5,518.9 137.5,509.5 145.5,514.8 153.5,513.5 161.5,504.1 169.5,496.3 177.5,496.3 185.5,499.5 193.5,496.9 201.5,508.1 209.5,516.2 217.5,518.3 225.5,516.7 233.5,532.3 241.5,596.6 249.5,646.2 257.5,661.5 265.5,648.1 273.5,644.9 281.5,626.1 289.5,605.2 297.5,606.8 305.5,626.1 313.5,612.7 321.5,572.5 329.5,581.9 337.5,623.4 345.5,641.6 353.5,625.6 361.5,599.3 369.5,585.3 377.5,555.0 385.5,523.7 393.5,541.6 401.5,592.6 409.5,631.5 417.5,657.5 425.5,646.2 433.5,634.1 441.5,591.2 449.5,593.4 457.5,575.2 465.5,612.2 473.5,615.4 481.5,653.4 489.5,657.5 497.5,618.0 505.5,561.7 513.5,531.7 521.5,547.0 529.5,569.8 537.5,589.9 545.5,593.9 553.5,597.9 561.5,548.3 569.5,540.3 577.5,517.5 585.5,529.0 593.5,529.6 601.5,539.5 609.5,521.5 617.5,509.5 625.5,499.3 633.5,503.3 641.5,532.3 649.5,561.7 657.5,613.5 665.5,581.9 673.5,594.5 681.5,599.3 689.5,635.5 697.5,618.0 705.5,608.7 713.5,592.6 721.5,556.4 729.5,521.5 737.5,518.0 745.5,532.3 753.5,561.7 761.5,584.5 769.5,623.4 777.5,634.7 785.5,636.3 793.5,615.4 801.5,620.2 809.5,615.9 817.5,599.8 825.5,572.5 833.5,569.3 841.5,587.2 849.5,625.3 857.5,633.3 865.5,606.8 873.5,556.4 881.5,536.3 889.5,518.3 897.5,529.6 905.5,545.1 913.5,559.6 921.5,565.8 929.5,569.8 937.5,605.2 945.5,610.0 953.5,588.6 961.5,600.6 969.5,626.1 977.5,627.7 985.5,599.5 993.5,571.1 1001.5,581.1 1009.5,604.6 1017.5,650.8 1025.5,631.5 1033.5,607.9 1041.5,585.6" fill="none" stroke="#20B2AA" stroke-width="1"/>
<polyline class="c" points="9.5,596.6 17.5,572.5 25.5,547.7 33.5,538.3 41.5,545.7 49.5,553.0 57.5,544.1 65.5,530.5 73.5,525.6 81.5,547.4 89.5,576.0 97.5,606.6 105.5,615.1 113.5,609.7 121.5,590.3 129.5,559.1 137.5,531.8 145.5,514.4 153.5,512.6 161.5,510.8 169.5,504.6 177.5,498.9 185.5,497.4 193.5,497.6 201.5,501.5 209.5,507.1 217.5,514.2 225.5,517.1 233.5,522.4 241.5,548.5 249.5,591.7 257.5,634.8 265.5,651.9 273.5,651.5 281.5,639.7 289.5,625.4 297.5,612.7 305.5,612.7 313.5,615.2 321.5,603.7 329.5,589.0 337.5,592.6 345.5,615.6 353.5,630.2 361.5,622.2 369.5,603.4 377.5,579.9 385.5,554.7 393.5,540.1 401.5,552.6 409.5,588.6 417.5,627.2 425.5,645.0 433.5,645.9 441.5,623.9 449.5,606.3 457.5,586.6 465.5,593.6 473.5,600.9 481.5,627.0 489.5,642.1 497.5,643.0 505.5,612.4 513.5,570.5 521.5,546.8 529.5,549.5 537.5,568.9 545.5,584.5 553.5,593.9 561.5,580.1 569.5,562.2 577.5,535.4 585.5,529.0 593.5,525.4 601.5,532.7 609.5,530.2 617.5,523.5 625.5,510.1 633.5,504.0 641.5,511.6 649.5,532.4 657.5,569.2 665.5,585.7 673.5,596.6 681.5,591.9 689.5,609.7 697.5,617.6 705.5,620.7 713.5,606.4 721.5,585.9 729.5,556.8 737.5,532.0 745.5,523.9 753.5,537.4 761.5,559.5 769.5,589.9 777.5,614.2 785.5,631.5 793.5,628.8 801.5,623.9 809.5,617.2 817.5,612.0 825.5,596.1 833.5,580.5 841.5,576.3 849.5,593.9 857.5,615.3 865.5,621.8 873.5,598.8 881.5,566.5 889.5,537.0 897.5,528.1 905.5,531.0 913.5,544.8 921.5,556.8 929.5,565.1 937.5,580.2 945.5,595.0 953.5,601.2 961.5,599.7 969.5,605.1 977.5,618.1 985.5,617.8 993.5,599.5 1001.5,583.9 1009.5,585.6 1017.5,612.2 1025.5,629.0 1033.5,630.0 1041.5,608.3" fill="none" stroke="#FF0000" stroke-width="1"/>
</g>
<path d="M11 106h7l-3.500 4z" fill="#000"/>
<rect class="c" x="22" y="103" width="209" height="12" fill="#fff" />
<text x="23.7" y="111.5" class="ax" textLength="59" lengthAdjust="spacingAndGlyphs">GBPUSD,M30</text>
<text x="90.4" y="111.5" class="ax" textLength="139" lengthAdjust="spacingAndGlyphs">1.68017 1.68037 1.67970 1.67985</text>
<rect class="c" x="12" y="494" width="114" height="10" fill="#fff" />
<text x="13" y="502" class="ax" textLength="112" lengthAdjust="spacingAndGlyphs">Sto(5,3,3) 50.1355 38.0645</text>
<rect class="c" x="1320" y="113" width="2" height="1" fill="#000" />
<text x="1325.5" y="115.5" class="ax" textLength="32" lengthAdjust="spacingAndGlyphs">1.68410</text>
<rect class="c" x="1320" y="146" width="2" height="1" fill="#000" />
<text x="1325.5" y="148.5" class="ax" textLength="32" lengthAdjust="spacingAndGlyphs">1.68355</text>
<rect class="c" x="1320" y="181" width="2" height="1" fill="#000" />
<text x="1325.5" y="183.5" class="ax" textLength="32" lengthAdjust="spacingAndGlyphs">1.68295</text>
<rect class="c" x="1320" y="214" width="2" height="1" fill="#000" />
<text x="1325.5" y="216.5" class="ax" textLength="32" lengthAdjust="spacingAndGlyphs">1.68240</text>
<rect class="c" x="1320" y="247" width="2" height="1" fill="#000" />
<text x="1325.5" y="249.5" class="ax" textLength="32" lengthAdjust="spacingAndGlyphs">1.68185</text>
<rect class="c" x="1320" y="282" width="2" height="1" fill="#000" />
<text x="1325.5" y="284.5" class="ax" textLength="32" lengthAdjust="spacingAndGlyphs">1.68125</text>
<rect class="c" x="1320" y="315" width="2" height="1" fill="#000" />
<text x="1325.5" y="317.5" class="ax" textLength="32" lengthAdjust="spacingAndGlyphs">1.68070</text>
<rect class="c" x="1320" y="350" width="2" height="1" fill="#000" />
<text x="1325.5" y="352.5" class="ax" textLength="32" lengthAdjust="spacingAndGlyphs">1.68010</text>
<rect class="c" x="1320" y="383" width="2" height="1" fill="#000" />
<text x="1325.5" y="385.5" class="ax" textLength="32" lengthAdjust="spacingAndGlyphs">1.67955</text>
<rect class="c" x="1320" y="418" width="2" height="1" fill="#000" />
<text x="1325.5" y="420.5" class="ax" textLength="32" lengthAdjust="spacingAndGlyphs">1.67895</text>
<rect class="c" x="1320" y="451" width="2" height="1" fill="#000" />
<text x="1325.5" y="453.5" class="ax" textLength="32" lengthAdjust="spacingAndGlyphs">1.67840</text>
<rect class="c" x="1320" y="484" width="2" height="1" fill="#000" />
<text x="1325.5" y="486.5" class="ax" textLength="32" lengthAdjust="spacingAndGlyphs">1.67785</text>
<rect class="c" x="1319" y="253" width="43" height="11" fill="#FF0000" />
<text x="1325.5" y="262" class="ax w" textLength="32" lengthAdjust="spacingAndGlyphs">1.68164</text>
<rect class="c" x="1322" y="360" width="39" height="11" fill="#000" />
<text x="1325.5" y="369" class="ax w" textLength="32" lengthAdjust="spacingAndGlyphs">1.67985</text>
<text x="1323.5" y="499.6" class="ax" textLength="14" lengthAdjust="spacingAndGlyphs">100</text>
<text x="1322" y="531" class="ax" textLength="9.5" lengthAdjust="spacingAndGlyphs">80</text>
<text x="1322" y="644.5" class="ax" textLength="9.5" lengthAdjust="spacingAndGlyphs">20</text>
<text x="1323" y="677.5" class="ax" textLength="4.7" lengthAdjust="spacingAndGlyphs">0</text>
<rect class="c" x="9" y="682" width="1" height="3" fill="#000" />
<text x="8.5" y="693.3" class="ax" textLength="50" lengthAdjust="spacingAndGlyphs">18 Apr 2014</text>
<rect class="c" x="73" y="682" width="1" height="3" fill="#000" />
<text x="72.5" y="693.3" class="ax" textLength="54" lengthAdjust="spacingAndGlyphs">21 Apr 02:00</text>
<rect class="c" x="137" y="682" width="1" height="3" fill="#000" />
<text x="136.5" y="693.3" class="ax" textLength="54" lengthAdjust="spacingAndGlyphs">21 Apr 06:00</text>
<rect class="c" x="201" y="682" width="1" height="3" fill="#000" />
<text x="200.5" y="693.3" class="ax" textLength="54" lengthAdjust="spacingAndGlyphs">21 Apr 10:00</text>
<rect class="c" x="265" y="682" width="1" height="3" fill="#000" />
<text x="264.5" y="693.3" class="ax" textLength="54" lengthAdjust="spacingAndGlyphs">21 Apr 14:00</text>
<rect class="c" x="329" y="682" width="1" height="3" fill="#000" />
<text x="328.5" y="693.3" class="ax" textLength="54" lengthAdjust="spacingAndGlyphs">21 Apr 18:00</text>
<rect class="c" x="393" y="682" width="1" height="3" fill="#000" />
<text x="392.5" y="693.3" class="ax" textLength="54" lengthAdjust="spacingAndGlyphs">21 Apr 22:00</text>
<rect class="c" x="457" y="682" width="1" height="3" fill="#000" />
<text x="456.5" y="693.3" class="ax" textLength="54" lengthAdjust="spacingAndGlyphs">22 Apr 02:00</text>
<rect class="c" x="521" y="682" width="1" height="3" fill="#000" />
<text x="520.5" y="693.3" class="ax" textLength="54" lengthAdjust="spacingAndGlyphs">22 Apr 06:00</text>
<rect class="c" x="585" y="682" width="1" height="3" fill="#000" />
<text x="584.5" y="693.3" class="ax" textLength="54" lengthAdjust="spacingAndGlyphs">22 Apr 10:00</text>
<rect class="c" x="649" y="682" width="1" height="3" fill="#000" />
<text x="648.5" y="693.3" class="ax" textLength="54" lengthAdjust="spacingAndGlyphs">22 Apr 14:00</text>
<rect class="c" x="713" y="682" width="1" height="3" fill="#000" />
<text x="712.5" y="693.3" class="ax" textLength="54" lengthAdjust="spacingAndGlyphs">22 Apr 18:00</text>
<rect class="c" x="777" y="682" width="1" height="3" fill="#000" />
<text x="776.5" y="693.3" class="ax" textLength="54" lengthAdjust="spacingAndGlyphs">22 Apr 22:00</text>
<rect class="c" x="841" y="682" width="1" height="3" fill="#000" />
<text x="840.5" y="693.3" class="ax" textLength="54" lengthAdjust="spacingAndGlyphs">23 Apr 02:00</text>
<rect class="c" x="905" y="682" width="1" height="3" fill="#000" />
<text x="904.5" y="693.3" class="ax" textLength="54" lengthAdjust="spacingAndGlyphs">23 Apr 06:00</text>
<rect class="c" x="969" y="682" width="1" height="3" fill="#000" />
<text x="968.5" y="693.3" class="ax" textLength="54" lengthAdjust="spacingAndGlyphs">23 Apr 10:00</text>
<rect class="c" x="1033" y="682" width="1" height="3" fill="#000" />
<text x="1032.5" y="693.3" class="ax" textLength="54" lengthAdjust="spacingAndGlyphs">23 Apr 14:00</text>
<rect class="c" x="4" y="721" width="1360" height="1" fill="#EDEBE6" />
<rect class="c" x="4" y="702" width="1" height="19" fill="#808080" />
<rect class="c" x="5" y="702" width="1" height="18" fill="#404040" />
<rect class="c" x="88" y="702" width="84" height="18" fill="#fff" />
<rect class="c" x="88" y="702" width="1" height="18" fill="#000" />
<rect class="c" x="171" y="702" width="1" height="18" fill="#000" />
<rect class="c" x="88" y="719" width="84" height="1" fill="#000" />
<rect class="c" x="89" y="720" width="83" height="1" fill="#808080" />
<rect class="c" x="172" y="703" width="1" height="17" fill="#808080" />
<text x="18.5" y="713.8" class="tab" textLength="56.5" lengthAdjust="spacingAndGlyphs">EURUSD,H4</text>
<text x="97.5" y="713.8" class="tabs" textLength="63.5" lengthAdjust="spacingAndGlyphs">GBPUSD,M30</text>
<text x="182.5" y="713.8" class="tab" textLength="61" lengthAdjust="spacingAndGlyphs">EURJPY,M30</text>
<text x="266.5" y="713.8" class="tab" textLength="57" lengthAdjust="spacingAndGlyphs">EURCHF,H4</text>
<text x="348.5" y="713.8" class="tab" textLength="55.5" lengthAdjust="spacingAndGlyphs">EURGBP,H4</text>
<text x="427.5" y="713.8" class="tab" textLength="67.5" lengthAdjust="spacingAndGlyphs">AUDNZD,Daily</text>
<text x="519" y="713.8" class="tab" textLength="52" lengthAdjust="spacingAndGlyphs">GBPJPY,H1</text>
<text x="594" y="713.8" class="tab" textLength="67" lengthAdjust="spacingAndGlyphs">USDCHF,Daily</text>
<text x="682" y="713.8" class="tab" textLength="53.5" lengthAdjust="spacingAndGlyphs">USDJPY,H1</text>
<text x="758" y="713.8" class="tab" textLength="58.5" lengthAdjust="spacingAndGlyphs">USDCAD,H4</text>
<text x="840" y="713.8" class="tab" textLength="55" lengthAdjust="spacingAndGlyphs">GBPCHF,H4</text>
<text x="919" y="713.8" class="tab" textLength="64" lengthAdjust="spacingAndGlyphs">AUDUSD,M15</text>
<text x="1006.5" y="713.8" class="tab" textLength="56" lengthAdjust="spacingAndGlyphs">NZDUSD,H1</text>
<text x="1086.5" y="713.8" class="tab" textLength="56.5" lengthAdjust="spacingAndGlyphs">XAUUSD,H4</text>
<rect class="c" x="257" y="704" width="1" height="13" fill="#404040" />
<rect class="c" x="338" y="704" width="1" height="13" fill="#404040" />
<rect class="c" x="416" y="704" width="1" height="13" fill="#404040" />
<rect class="c" x="509" y="704" width="1" height="13" fill="#404040" />
<rect class="c" x="584" y="704" width="1" height="13" fill="#404040" />
<rect class="c" x="673" y="704" width="1" height="13" fill="#404040" />
<rect class="c" x="749" y="704" width="1" height="13" fill="#404040" />
<rect class="c" x="829" y="704" width="1" height="13" fill="#404040" />
<rect class="c" x="907" y="704" width="1" height="13" fill="#404040" />
<rect class="c" x="996" y="704" width="1" height="13" fill="#404040" />
<rect class="c" x="1076" y="704" width="1" height="13" fill="#404040" />
<rect class="c" x="1156" y="704" width="1" height="13" fill="#404040" />
<path d="M1339 706v8l-4-4zM1352 706v8l4-4z" fill="#9C9C9C"/>
<text x="5.5" y="737" textLength="119" lengthAdjust="spacingAndGlyphs">Äëÿ ñïðàâêè, íàæìèòå F1</text>
<text x="649" y="737" textLength="35" lengthAdjust="spacingAndGlyphs">Default</text>
<rect class="c" x="643" y="725" width="1" height="15" fill="#808080" />
<rect class="c" x="644" y="725" width="1" height="15" fill="#FFFFFF" />
<rect class="c" x="752" y="725" width="1" height="15" fill="#808080" />
<rect class="c" x="753" y="725" width="1" height="15" fill="#FFFFFF" />
<rect class="c" x="854" y="725" width="1" height="15" fill="#808080" />
<rect class="c" x="855" y="725" width="1" height="15" fill="#FFFFFF" />
<rect class="c" x="925" y="725" width="1" height="15" fill="#808080" />
<rect class="c" x="926" y="725" width="1" height="15" fill="#FFFFFF" />
<rect class="c" x="996" y="725" width="1" height="15" fill="#808080" />
<rect class="c" x="997" y="725" width="1" height="15" fill="#FFFFFF" />
<rect class="c" x="1065" y="725" width="1" height="15" fill="#808080" />
<rect class="c" x="1066" y="725" width="1" height="15" fill="#FFFFFF" />
<rect class="c" x="1136" y="725" width="1" height="15" fill="#808080" />
<rect class="c" x="1137" y="725" width="1" height="15" fill="#FFFFFF" />
<rect class="c" x="1202" y="725" width="1" height="15" fill="#808080" />
<rect class="c" x="1203" y="725" width="1" height="15" fill="#FFFFFF" />
<rect class="c" x="1208" y="727" width="2" height="12" fill="#5C8A14" />
<rect class="c" x="1208" y="737" width="2" height="2" fill="#C01010" />
<rect class="c" x="1211" y="727" width="2" height="12" fill="#5C8A14" />
<rect class="c" x="1211" y="736" width="2" height="3" fill="#C01010" />
<rect class="c" x="1214" y="727" width="2" height="12" fill="#5C8A14" />
<rect class="c" x="1214" y="734" width="2" height="5" fill="#C01010" />
<rect class="c" x="1217" y="727" width="2" height="12" fill="#5C8A14" />
<rect class="c" x="1217" y="733" width="2" height="6" fill="#C01010" />
<rect class="c" x="1220" y="727" width="2" height="12" fill="#5C8A14" />
<rect class="c" x="1220" y="732" width="2" height="7" fill="#C01010" />
<rect class="c" x="1223" y="727" width="2" height="12" fill="#5C8A14" />
<rect class="c" x="1223" y="731" width="2" height="8" fill="#C01010" />
<rect class="c" x="1226" y="727" width="2" height="12" fill="#5C8A14" />
<rect class="c" x="1226" y="729" width="2" height="10" fill="#C01010" />
<rect class="c" x="1229" y="727" width="2" height="12" fill="#5C8A14" />
<rect class="c" x="1229" y="728" width="2" height="11" fill="#C01010" />
<text x="1256.5" y="737" textLength="47.500" lengthAdjust="spacingAndGlyphs">5504/7 kb</text>
<g class="c" stroke="#808080" fill="none"><path d="M1351 742l11-11M1355 742l7-7M1359 742l3-3"/></g><g class="c" stroke="#fff" fill="none"><path d="M1350 742l12-12M1354 742l8-8M1358 742l4-4"/></g>
<rect class="c" x="4" y="743" width="1360" height="1" fill="#FFFFFF" />
</svg></body></html>
